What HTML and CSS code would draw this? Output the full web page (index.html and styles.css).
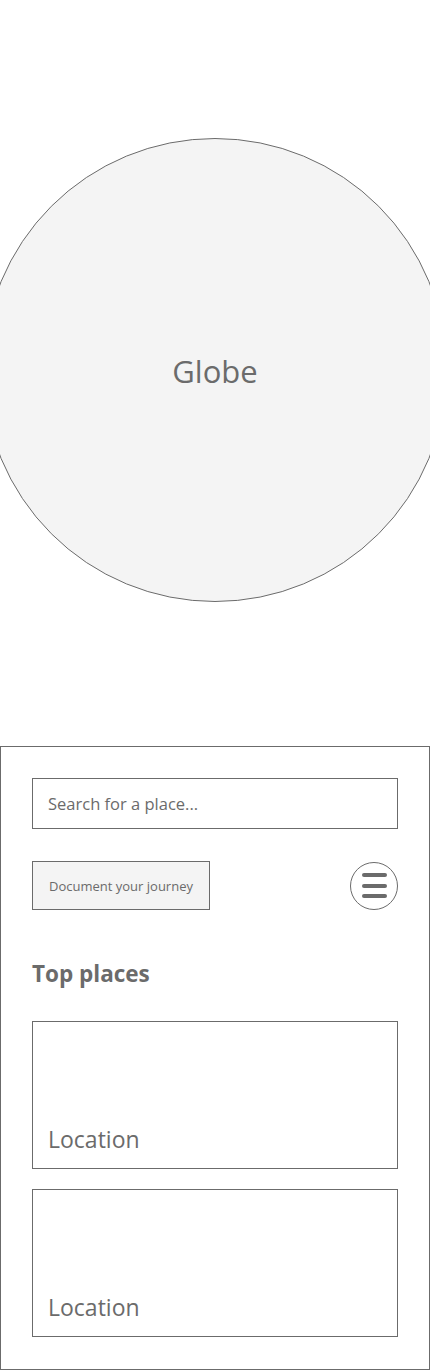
FILE: index.html
```html
<!DOCTYPE html>
<html>
<head>
<meta charset="utf-8">
<link rel="stylesheet" href="styles.css">
</head>
<body>
<section class="globe-area">
  <div class="globe"><span>Globe</span></div>
</section>
<section class="panel">
  <div class="search">Search for a place...</div>
  <div class="actions">
    <button class="doc-btn">Document your journey</button>
    <button class="menu-btn" aria-label="menu">
      <span class="bar"></span><span class="bar"></span><span class="bar"></span>
    </button>
  </div>
  <h2 class="heading">Top places</h2>
  <div class="cards">
    <div class="card"><span class="card-label">Location</span></div>
    <div class="card"><span class="card-label">Location</span></div>
  </div>
</section>
</body>
</html>
```
FILE: styles.css
```css
* { box-sizing: border-box; }
html, body { margin: 0; padding: 0; }
body {
  width: 430px;
  height: 1370px;
  overflow: hidden;
  background: #fff;
  font-family: "Open Sans", "Noto Sans", sans-serif;
  color: #6b6b6b;
}
.globe-area {
  height: 746px;
  padding-top: 138px;
  display: flex;
  justify-content: center;
  align-items: flex-start;
  overflow: hidden;
}
.globe {
  flex: 0 0 464px;
  width: 464px;
  height: 464px;
  border-radius: 50%;
  background: #f4f4f4;
  border: 1px solid #6b6b6b;
  display: flex;
  align-items: center;
  justify-content: center;
  padding-top: 2px;
  font-size: 31px;
  color: #6b6b6b;
}
.panel {
  width: 430px;
  height: 624px;
  border: 1px solid #6b6b6b;
  padding: 31px;
}
.search {
  height: 51px;
  border: 1px solid #6b6b6b;
  padding: 0 15px;
  display: flex;
  align-items: center;
  font-size: 16.5px;
  color: #6b6b6b;
}
.actions {
  margin-top: 32px;
  display: flex;
  justify-content: space-between;
  align-items: center;
}
.doc-btn {
  width: 178px;
  height: 49px;
  background: #f4f4f4;
  border: 1px solid #6b6b6b;
  font-family: inherit;
  font-size: 13px;
  color: #6b6b6b;
  padding: 0;
  margin: 0;
}
.menu-btn {
  width: 48px;
  height: 48px;
  border-radius: 50%;
  border: 1px solid #6b6b6b;
  background: #fff;
  padding: 0;
  margin: 0;
  display: flex;
  flex-direction: column;
  align-items: center;
  justify-content: center;
  gap: 6.5px;
}
.bar {
  display: block;
  width: 25px;
  height: 4px;
  border-radius: 2px;
  background: #6b6b6b;
}
.heading {
  margin: 49px 0 0;
  font-size: 22.5px;
  font-weight: 700;
  line-height: 30px;
  color: #6b6b6b;
}
.cards {
  margin-top: 32px;
  display: flex;
  flex-direction: column;
  gap: 20px;
}
.card {
  height: 148px;
  border: 1px solid #6b6b6b;
  padding: 0 15px 14px;
  display: flex;
  align-items: flex-end;
}
.card-label {
  font-size: 23px;
  line-height: 30px;
  color: #6b6b6b;
}
```
